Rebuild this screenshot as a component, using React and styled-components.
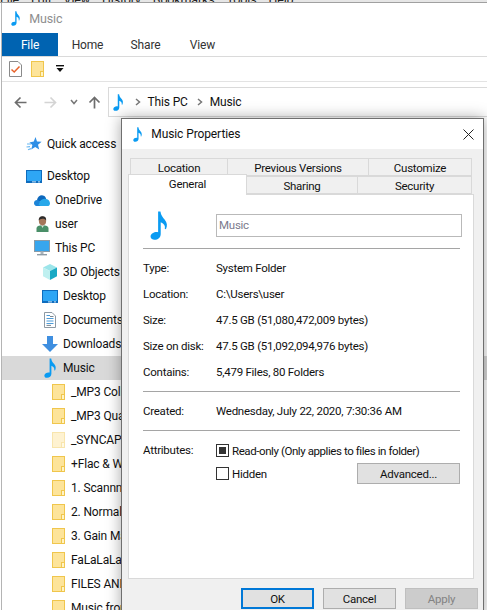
import styled, { createGlobalStyle } from 'styled-components';

const GlobalStyle = createGlobalStyle`
  html, body {
    margin: 0;
    padding: 0;
    background: #fff;
  }
  * {
    box-sizing: border-box;
  }
`;

const Screen = styled.div`
  position: relative;
  width: 487px;
  height: 610px;
  overflow: hidden;
  background: #fff;
  color: #111;
  font-family: Roboto, "Open Sans", sans-serif;
  font-size: 12px;
  letter-spacing: -0.15px;
`;

const BrowserMenu = styled.div`
  height: 3px;
  display: flex;
  gap: 12px;
  background: #e6e6e6;
  border-bottom: 1px solid #a0a0a0;
  overflow: hidden;
  line-height: 0;
  font-size: 12.5px;
  color: #222;
`;

const Explorer = styled.div`
  margin-left: 1px;
  border-left: 1px solid #b4b4b4;
  height: 607px;
  background: #fff;
`;

const TitleBar = styled.div`
  height: 30px;
  padding-left: 9px;
  display: flex;
  align-items: center;
  gap: 9px;
  color: #8e8e8e;
  font-size: 12.5px;
`;

const RibbonTabs = styled.div`
  height: 24px;
  display: flex;
  border-bottom: 1px solid #dadada;
`;

const RibbonTab = styled.div`
  width: ${p => p.$width}px;
  height: 23px;
  display: flex;
  align-items: center;
  justify-content: center;
  font-size: 12px;
  color: ${p => (p.$active ? '#fff' : '#333')};
  background: ${p => (p.$active ? '#0063b1' : 'transparent')};
`;

const QuickBar = styled.div`
  height: 25px;
  padding-left: 7px;
  display: flex;
  align-items: center;
  border-bottom: 1px solid #e3e3e3;
`;

const QuickItem = styled.div`
  width: ${p => p.$width}px;
  display: flex;
`;

const NavBar = styled.div`
  height: 35px;
  padding: 5px 0 0 12px;
  display: flex;
  align-items: flex-start;
`;

const NavButtons = styled.div`
  width: 94px;
  height: 30px;
  display: grid;
  grid-template-columns: 30px 27px 17px 13px;
  align-items: center;
`;

const AddressBar = styled.div`
  flex: 1;
  height: 30px;
  padding-left: 4px;
  display: flex;
  align-items: center;
  font-size: 12px;
  border: 1px solid #dadada;
  border-right: none;
`;

const Crumb = styled.span`
  margin-left: 7px;
`;

const Sep = styled.span`
  margin-left: ${p => p.$left}px;
  display: flex;
`;

const NavPane = styled.div`
  padding-top: 15px;
`;

const NavRow = styled.div`
  height: 24px;
  margin-bottom: ${p => (p.$spaced ? 8 : 0)}px;
  padding-left: ${p => 24 + p.$level * 8}px;
  display: flex;
  align-items: center;
  gap: 5px;
  white-space: nowrap;
  background: ${p => (p.$selected ? '#d9d9d9' : 'transparent')};
`;

const IconSlot = styled.span`
  width: 16px;
  height: 16px;
  flex: none;
  display: flex;
  align-items: center;
  justify-content: center;
`;

const Dialog = styled.div`
  position: absolute;
  left: 121px;
  top: 118px;
  width: 363px;
  height: 500px;
  display: flex;
  flex-direction: column;
  background: #f0f0f0;
  border: 1px solid #6f6f6f;
  box-shadow: 0 0 14px rgba(0, 0, 0, 0.35);
  font-size: 11.5px;
  letter-spacing: -0.25px;
`;

const DialogTitle = styled.div`
  height: 30px;
  flex: none;
  padding: 0 9px 0 11px;
  display: flex;
  align-items: center;
  gap: 9px;
  background: #fff;
  font-size: 12px;
  letter-spacing: -0.1px;
  color: #111;
`;

const CloseButton = styled.span`
  margin-left: auto;
  display: flex;
`;

const TabArea = styled.div`
  padding: 9px 0 0 6px;
  flex: none;
`;

const TabLine = styled.div`
  display: flex;
  height: 18px;
  padding-left: ${p => p.$inset}px;
`;

const FrontLine = styled(TabLine)`
  position: relative;
  z-index: 1;
`;

const Tab = styled.div`
  width: ${p => p.$width}px;
  height: ${p => (p.$active ? 21 : 18)}px;
  margin-top: ${p => (p.$active ? -2 : 0)}px;
  display: flex;
  align-items: center;
  justify-content: center;
  padding: ${p => (p.$active ? '0 0 3px' : '1px 0 0')};
  border: 1px solid #d9d9d9;
  border-left-width: ${p => (p.$first ? 1 : 0)}px;
  border-bottom-width: ${p => (p.$active ? 0 : 1)}px;
  background: ${p => (p.$active ? '#fff' : '#f0f0f0')};
`;

const Panel = styled.div`
  width: 346px;
  height: 385px;
  margin-left: 6px;
  padding: 19px 13px 0 14px;
  flex: none;
  background: #fff;
  border: 1px solid #d9d9d9;
`;

const NameRow = styled.div`
  height: 34px;
  margin-top: -6px;
  display: grid;
  grid-template-columns: 73px 1fr;
  align-items: center;
`;

const BigIcon = styled.div`
  padding-left: 7px;
  display: flex;
`;

const NameField = styled.div`
  height: 23px;
  margin-right: -2px;
  padding: 0 0 1px 2px;
  display: flex;
  align-items: center;
  color: #7a7a8c;
  border: 1px solid #b9b9b9;
`;

const Separator = styled.div`
  height: 1px;
  margin-top: ${p => p.$top}px;
  background: #a5a5a5;
`;

const PropList = styled.div`
  padding-top: 6px;
`;

const PropRow = styled.div`
  height: 26px;
  display: grid;
  grid-template-columns: 73px 1fr;
  align-items: center;
  white-space: nowrap;
`;

const CreatedRow = styled(PropRow)`
  margin-top: 6px;
`;

const AttributeGrid = styled.div`
  margin-top: 11px;
  display: grid;
  grid-template-columns: 73px 1fr;
`;

const AttributeLabel = styled.span`
  padding-top: 1px;
`;

const AttributeList = styled.div`
  display: flex;
  flex-direction: column;
  gap: 4px;
`;

const CheckRow = styled.div`
  display: flex;
  align-items: center;
  gap: 3px;
  height: ${p => (p.$tall ? 17 : 21)}px;
  white-space: nowrap;
  letter-spacing: ${p => (p.$tall ? '-0.42px' : 'inherit')};
`;

const Checkbox = styled.span`
  width: 13px;
  height: 13px;
  flex: none;
  display: flex;
  align-items: center;
  justify-content: center;
  border: 1px solid #333;
  background: #fff;
`;

const CheckMark = styled.span`
  width: 7px;
  height: 7px;
  background: #333;
`;

const Button = styled.div`
  width: ${p => p.$width}px;
  height: ${p => p.$height}px;
  display: flex;
  align-items: center;
  justify-content: center;
  background: ${p => (p.$disabled ? '#cccccc' : '#e1e1e1')};
  color: ${p => (p.$disabled ? '#838383' : '#111')};
  border: ${p => (p.$primary ? '2px solid #0078d7' : p.$disabled ? '1px solid #bfbfbf' : '1px solid #adadad')};
`;

const AdvancedButton = styled(Button)`
  margin-left: auto;
`;

const ButtonRow = styled.div`
  margin-top: 9px;
  padding-left: 119px;
  display: flex;
  gap: 9px;
`;

const TurnSvg = styled.svg`
  transform: rotate(${p => p.$rotate || 0}deg);
`;

const Note = ({ size = 16 }) => (
  <svg width={size * 0.62} height={size} viewBox="0 0 12 20">
    <path
      fill="#0a9bf2"
      d="M5.4 0.4 L7 0.4 C7.3 3 8.6 4.4 10 6 C11.6 7.9 12 10 10.8 12.6 L10 12.3 C10.5 10.3 9.6 8.8 7.2 7.8 L7.2 15.8 C7.2 18.4 4.9 20 2.6 19.8 C0.9 19.7 0 18.6 0.2 17.3 C0.5 15.4 3.2 14 5.4 14.6 Z"
    />
  </svg>
);

const Star = () => (
  <svg width="16" height="16" viewBox="0 0 16 16">
    <path fill="#2f8fe6" d="M9.5 1 L11 5.6 L15.6 5.8 L12 8.8 L13.2 13.6 L9.2 11 L5.2 13.4 L6.4 8.9 L3.4 6.4 L7.8 5.6 Z" />
    <path stroke="#69b7f2" strokeWidth="1.2" d="M1 8 L5 8 M0.5 11 L4 10.6 M2 13.8 L5 12.6" />
  </svg>
);

const DesktopIcon = () => (
  <svg width="16" height="13" viewBox="0 0 16 13">
    <rect x="0" y="0" width="16" height="13" fill="#0f6cbd" />
    <rect x="1" y="1" width="14" height="10" fill="#2ea6f5" />
    <rect x="6" y="11.4" width="4" height="1" fill="#cfe9fb" />
    <rect x="12" y="11.4" width="2" height="1" fill="#cfe9fb" />
  </svg>
);

const Cloud = () => (
  <svg width="16" height="11" viewBox="0 0 16 11">
    <path fill="#0d68bd" d="M3 5 C3.6 2 6 0 8.6 0.4 C10.6 0.6 11.8 2 12.2 3.8 L9 6 L3 7 Z" />
    <path fill="#1c84d8" d="M0 8 C0 6 1.8 4.6 3.8 5 L6 6.4 L9 9 L7 11 L2.4 11 C1 11 0 9.6 0 8 Z" />
    <path fill="#28a8ea" d="M6 6.4 C7.4 4 10.2 3.2 12.2 4 C14.6 4.4 16 6.4 16 8.4 C16 10 14.8 11 13.4 11 L6.4 11 L4.6 9.4 Z" />
  </svg>
);

const UserIcon = () => (
  <svg width="13" height="16" viewBox="0 0 13 16">
    <path fill="#4a8f68" d="M0.5 16 L0.5 12.4 C0.5 10.4 2.6 9.2 6.5 9.2 C10.4 9.2 12.5 10.4 12.5 12.4 L12.5 16 Z" />
    <path fill="#d7e6dc" d="M5 9.2 L8 9.2 L6.6 12 Z" />
    <ellipse cx="6.5" cy="5" rx="3.6" ry="4.4" fill="#a5765a" />
    <path fill="#2b2b2b" d="M2.8 4.6 C2.4 1.6 4.4 0.2 6.6 0.2 C9 0.2 10.4 1.8 10.2 4.4 C9.2 3 7.8 2.6 6.2 2.8 C4.8 3 3.6 3.4 2.8 4.6 Z" />
  </svg>
);

const PcIcon = () => (
  <svg width="16" height="16" viewBox="0 0 16 16">
    <rect x="0.5" y="0.5" width="15" height="11" fill="#37a6ee" stroke="#8a9aa6" />
    <rect x="6.5" y="11.5" width="3" height="2.5" fill="#a9b4bb" />
    <rect x="3" y="14" width="10" height="1.4" fill="#8f9ca6" />
  </svg>
);

const CubeIcon = () => (
  <svg width="16" height="16" viewBox="0 0 16 16">
    <path fill="#9ce5ea" d="M8 0 L15 3.6 L8 7 L1 3.6 Z" />
    <path fill="#bff0f0" d="M1 3.6 L8 7 L8 16 L1 12.2 Z" />
    <path fill="#19a9c4" d="M15 3.6 L8 7 L8 16 L15 12.2 Z" />
  </svg>
);

const DocIcon = () => (
  <svg width="12" height="16" viewBox="0 0 12 16">
    <path fill="#fff" stroke="#8d99a3" d="M0.5 0.5 L8 0.5 L11.5 4 L11.5 15.5 L0.5 15.5 Z" />
    <path stroke="#4c9bd8" d="M2.5 3.5 L6 3.5 M2.5 6.5 L9.5 6.5 M2.5 9 L9.5 9 M2.5 11.5 L9.5 11.5" />
    <path stroke="#7a8791" d="M2.5 13.4 L7 13.4 M6 4.5 L9.5 4.5" />
  </svg>
);

const DownIcon = () => (
  <svg width="16" height="16" viewBox="0 0 16 16">
    <path fill="#3f8fe0" d="M5 0 L11 0 L11 8 L16 8 L8 16 L0 8 L5 8 Z" />
  </svg>
);

const Folder = ({ $faded }) => (
  <svg width="13" height="16" viewBox="0 0 13 16" opacity={$faded ? 0.45 : 1}>
    <rect x="0.5" y="0.5" width="12" height="15" fill="#fde49a" stroke="#f0c64c" />
    <rect x="9.5" y="10.5" width="3" height="5" fill="#fff3c4" stroke="#f0c64c" />
  </svg>
);

const CheckDoc = () => (
  <svg width="13" height="16" viewBox="0 0 13 16">
    <path fill="#fff" stroke="#8a8a8a" d="M0.5 0.5 L9 0.5 L12.5 4 L12.5 15.5 L0.5 15.5 Z" />
    <path fill="none" stroke="#e8622a" strokeWidth="1.5" d="M2.5 8.5 L5.2 11 L10.5 5.5" />
  </svg>
);

const Caret = () => (
  <svg width="8" height="8" viewBox="0 0 8 8">
    <rect x="0" y="0" width="8" height="1.4" fill="#111" />
    <path fill="#111" d="M0.5 3 L7.5 3 L4 7 Z" />
  </svg>
);

const Arrow = ({ color, rotate }) => (
  <TurnSvg width="13" height="13" viewBox="0 0 13 13" $rotate={rotate}>
    <path fill="none" stroke={color} strokeWidth="1.7" d="M12.5 6.5 L1.5 6.5 M6.5 1.5 L1.5 6.5 L6.5 11.5" />
  </TurnSvg>
);

const Chevron = ({ rotate }) => (
  <TurnSvg width="6" height="8" viewBox="0 0 6 8" $rotate={rotate}>
    <path fill="none" stroke="#777" strokeWidth="1.5" d="M1 1 L4.5 4 L1 7" />
  </TurnSvg>
);

const CloseIcon = () => (
  <svg width="11" height="11" viewBox="0 0 11 11">
    <path stroke="#222" strokeWidth="1" d="M0.5 0.5 L10.5 10.5 M10.5 0.5 L0.5 10.5" />
  </svg>
);

const navItems = [
  { label: 'Quick access', level: 0, icon: <Star />, spaced: true },
  { label: 'Desktop', level: 0, icon: <DesktopIcon /> },
  { label: 'OneDrive', level: 1, icon: <Cloud /> },
  { label: 'user', level: 1, icon: <UserIcon /> },
  { label: 'This PC', level: 1, icon: <PcIcon /> },
  { label: '3D Objects', level: 2, icon: <CubeIcon /> },
  { label: 'Desktop', level: 2, icon: <DesktopIcon /> },
  { label: 'Documents', level: 2, icon: <DocIcon /> },
  { label: 'Downloads', level: 2, icon: <DownIcon /> },
  { label: 'Music', level: 2, icon: <Note size={20} />, selected: true },
  { label: '_MP3 Collection', level: 3, icon: <Folder /> },
  { label: '_MP3 Quality', level: 3, icon: <Folder /> },
  { label: '_SYNCAPP', level: 3, icon: <Folder $faded /> },
  { label: '+Flac & Wav', level: 3, icon: <Folder /> },
  { label: '1. Scannnnn', level: 3, icon: <Folder /> },
  { label: '2. Normalize', level: 3, icon: <Folder /> },
  { label: '3. Gain Match', level: 3, icon: <Folder /> },
  { label: 'FaLaLaLaLa', level: 3, icon: <Folder /> },
  { label: 'FILES AND', level: 3, icon: <Folder /> },
  { label: 'Music from', level: 3, icon: <Folder /> },
];

const properties = [
  ['Type:', 'System Folder'],
  ['Location:', 'C:\\Users\\user'],
  ['Size:', '47.5 GB (51,080,472,009 bytes)'],
  ['Size on disk:', '47.5 GB (51,092,094,976 bytes)'],
  ['Contains:', '5,479 Files, 80 Folders'],
];

const App = () => {
  return (
    <Screen>
      <GlobalStyle />
      <BrowserMenu>
        <span>File</span>
        <span>Edit</span>
        <span>View</span>
        <span>History</span>
        <span>Bookmarks</span>
        <span>Tools</span>
        <span>Help</span>
      </BrowserMenu>
      <Explorer>
        <TitleBar>
          <Note size={15} />
          Music
        </TitleBar>
        <RibbonTabs>
          <RibbonTab $width={56} $active>File</RibbonTab>
          <RibbonTab $width={59}>Home</RibbonTab>
          <RibbonTab $width={57}>Share</RibbonTab>
          <RibbonTab $width={57}>View</RibbonTab>
        </RibbonTabs>
        <QuickBar>
          <QuickItem $width={22}><CheckDoc /></QuickItem>
          <QuickItem $width={25}><Folder /></QuickItem>
          <QuickItem $width={10}><Caret /></QuickItem>
        </QuickBar>
        <NavBar>
          <NavButtons>
            <Arrow color="#6d6d6d" />
            <Arrow color="#d4d4d4" rotate={180} />
            <Chevron rotate={90} />
            <Arrow color="#6d6d6d" rotate={90} />
          </NavButtons>
          <AddressBar>
            <Note size={17} />
            <Sep $left={11}><Chevron /></Sep>
            <Crumb>This PC</Crumb>
            <Sep $left={9}><Chevron /></Sep>
            <Crumb>Music</Crumb>
          </AddressBar>
        </NavBar>
        <NavPane>
          {navItems.map((item, i) => (
            <NavRow key={i} $level={item.level} $spaced={item.spaced} $selected={item.selected}>
              <IconSlot>{item.icon}</IconSlot>
              {item.label}
            </NavRow>
          ))}
        </NavPane>
      </Explorer>

      <Dialog>
        <DialogTitle>
          <Note size={15} />
          Music Properties
          <CloseButton><CloseIcon /></CloseButton>
        </DialogTitle>
        <TabArea>
          <TabLine $inset={2}>
            <Tab $width={98} $first>Location</Tab>
            <Tab $width={141}>Previous Versions</Tab>
            <Tab $width={103}>Customize</Tab>
          </TabLine>
          <FrontLine $inset={0}>
            <Tab $width={119} $first $active>General</Tab>
            <Tab $width={111}>Sharing</Tab>
            <Tab $width={114}>Security</Tab>
          </FrontLine>
        </TabArea>
        <Panel>
          <NameRow>
            <BigIcon><Note size={29} /></BigIcon>
            <NameField>Music</NameField>
          </NameRow>
          <Separator $top={6} />
          <PropList>
            {properties.map(([label, value]) => (
              <PropRow key={label}>
                <span>{label}</span>
                <span>{value}</span>
              </PropRow>
            ))}
          </PropList>
          <Separator $top={6} />
          <CreatedRow>
            <span>Created:</span>
            <span>Wednesday, July 22, 2020, 7:30:36 AM</span>
          </CreatedRow>
          <Separator $top={6} />
          <AttributeGrid>
            <AttributeLabel>Attributes:</AttributeLabel>
            <AttributeList>
              <CheckRow $tall>
                <Checkbox><CheckMark /></Checkbox>
                Read-only (Only applies to files in folder)
              </CheckRow>
              <CheckRow>
                <Checkbox />
                Hidden
                <AdvancedButton $width={103} $height={21}>Advanced...</AdvancedButton>
              </CheckRow>
            </AttributeList>
          </AttributeGrid>
        </Panel>
        <ButtonRow>
          <Button $width={73} $height={21} $primary>OK</Button>
          <Button $width={73} $height={21}>Cancel</Button>
          <Button $width={73} $height={21} $disabled>Apply</Button>
        </ButtonRow>
      </Dialog>
    </Screen>
  );
};

export default App;
